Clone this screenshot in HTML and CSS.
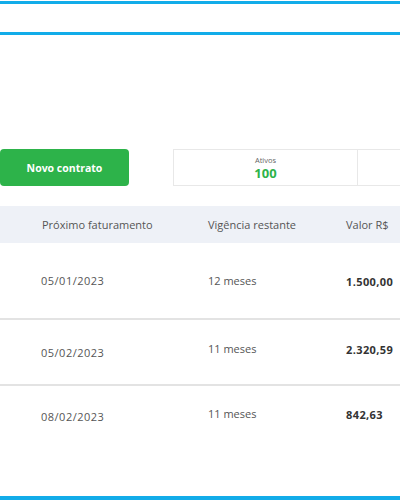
FILE: index.html
```html
<!DOCTYPE html>
<html lang="pt-BR">
<head>
<meta charset="utf-8">
<link rel="stylesheet" href="styles.css">
</head>
<body>
<div class="frame">
  <div class="topbar"></div>
  <div class="toolbar">
    <button class="btn-new">Novo contrato</button>
    <div class="stats">
      <div class="stat">
        <span class="stat-label">Ativos</span>
        <span class="stat-value">100</span>
      </div>
      <div class="stat"></div>
    </div>
  </div>
  <div class="table">
    <div class="thead">
      <span class="c-date">Próximo faturamento</span>
      <span class="c-term">Vigência restante</span>
      <span class="c-value">Valor R$</span>
    </div>
    <div class="row r1">
      <span class="c-date num">05/01/2023</span>
      <span class="c-term">12 meses</span>
      <span class="c-value money">1.500,00</span>
    </div>
    <div class="row r2">
      <span class="c-date num low">05/02/2023</span>
      <span class="c-term">11 meses</span>
      <span class="c-value money">2.320,59</span>
    </div>
    <div class="row r3">
      <span class="c-date num low">08/02/2023</span>
      <span class="c-term">11 meses</span>
      <span class="c-value money">842,63</span>
    </div>
  </div>
</div>
</body>
</html>
```
FILE: styles.css
```css
html, body {
  margin: 0;
  padding: 0;
  background: #fff;
}
body {
  font-family: "Open Sans", "Liberation Sans", sans-serif;
  color: #555;
}
.frame {
  width: 400px;
  height: 500px;
  box-sizing: border-box;
  padding-top: 1px;
  border-bottom: 4px solid #12ace9;
  display: flex;
  flex-direction: column;
  overflow: hidden;
}
.topbar {
  height: 28px;
  border-top: 3px solid #12ace9;
  border-bottom: 3px solid #12ace9;
  flex: none;
}
.toolbar {
  margin-top: 114px;
  display: flex;
  align-items: flex-start;
  gap: 44px;
}
.btn-new {
  flex: none;
  width: 129px;
  height: 37px;
  border: none;
  border-radius: 4px;
  background: #2db34a;
  color: #fff;
  font-family: "Open Sans", sans-serif;
  font-weight: 700;
  font-size: 10.5px;
  padding: 0;
  white-space: nowrap;
}
.stats {
  flex: 1;
  min-width: 0;
  display: flex;
  height: 37px;
  border-top: 1.5px solid #e8e8e8;
  border-bottom: 1.5px solid #e8e8e8;
  border-left: 1.5px solid #e8e8e8;
  box-sizing: border-box;
}
.stat {
  width: 183px;
  flex: none;
  display: flex;
  flex-direction: column;
  align-items: center;
  justify-content: center;
  border-right: 1.5px solid #e8e8e8;
}
.stat:last-child {
  flex: 1;
  width: auto;
  border-right: none;
}
.stat-label {
  font-size: 7.5px;
  color: #666;
  line-height: 9px;
  margin-bottom: 1px;
}
.stat-value {
  font-size: 13px;
  font-weight: 700;
  color: #2db34a;
  line-height: 14px;
}
.table {
  margin-top: 20px;
}
.thead {
  height: 37px;
  background: #eef1f7;
  display: flex;
  align-items: center;
  font-size: 11px;
  color: #555;
}
.c-date {
  width: 208px;
  padding-left: 42px;
  box-sizing: border-box;
  flex: none;
}
.c-term {
  width: 138px;
  flex: none;
}
.c-value { flex: none; }
.row {
  display: flex;
  font-size: 11px;
  color: #555;
  border-bottom: 2px solid #e3e3e3;
  box-sizing: border-box;
}
.row .c-date { padding-left: 41px; }
.num { letter-spacing: 0.5px; }
.r1 { height: 77px; padding-top: 30px; }
.r2 { height: 66px; padding-top: 21px; }
.r3 { border-bottom: none; padding-top: 20px; }
.low { padding-top: 4px; }
.r3 .low { padding-top: 3px; }
.money {
  font-weight: 700;
  color: #333;
  padding-top: 1px;
  letter-spacing: 0.4px;
}
```
